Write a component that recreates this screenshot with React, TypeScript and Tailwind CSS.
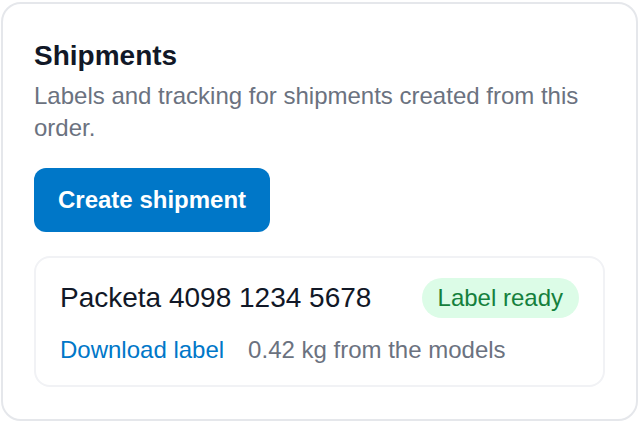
export default function App() {
  return (
    <div
      className="bg-white px-px pt-[2px]"
      style={{ fontFamily: '"Liberation Sans", Arial, sans-serif' }}
    >
      <section className="w-[637px] h-[419px] rounded-[20px] border-2 border-[#e5e7eb] bg-white px-[31px] pt-[34px]">
        <h2 className="text-[28px] leading-[36px] font-bold text-[#111827]">Shipments</h2>
        <p className="mt-[6px] text-[24px] leading-[32px] text-[#6b7280]">
          Labels and tracking for shipments created from this order.
        </p>

        <button className="mt-[24px] h-[64px] px-[24px] rounded-[12px] bg-[#0077c8] text-white text-[24px] font-bold">
          Create shipment
        </button>

        {/* Shipment card */}
        <div className="mt-[24px] w-[571px] rounded-[16px] border-2 border-[#f1f2f5] px-[24px] pt-[20px] pb-[19px]">
          <div className="flex items-center justify-between">
            <span className="text-[28px] leading-[36px] text-[#111827]">Packeta 4098 1234 5678</span>
            <span className="rounded-full bg-[#dcfce7] px-[16px] py-[4px] text-[24px] leading-[32px] text-[#15803d]">
              Label ready
            </span>
          </div>
          <div className="mt-[16px] flex items-center gap-[24px] text-[24px] leading-[32px]">
            <a className="text-[#0077c8]">Download label</a>
            <span className="text-[#6b7280]">0.42 kg from the models</span>
          </div>
        </div>
      </section>
    </div>
  );
}
